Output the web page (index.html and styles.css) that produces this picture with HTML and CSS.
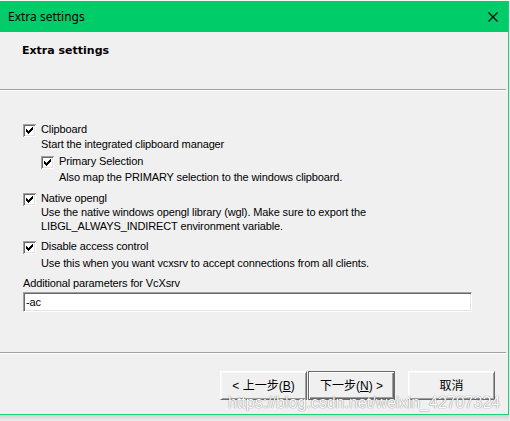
FILE: index.html
```html
<!DOCTYPE html>
<html>
<head>
<meta charset="utf-8">
<link rel="stylesheet" href="styles.css">
</head>
<body>
<div class="topstrip"></div>
<div class="window">
  <div class="titlebar">
    <span class="title">Extra settings</span>
    <svg class="close" width="10" height="10" viewBox="0 0 10 10"><path d="M0.5 0.5 L9.5 9.5 M9.5 0.5 L0.5 9.5" stroke="#000" stroke-width="1.1" fill="none"/></svg>
  </div>
  <div class="header"><h1>Extra settings</h1></div>
  <div class="sep"></div>
  <div class="content">
    <div class="opt g-clip">
      <svg class="cb" width="13" height="13" viewBox="0 0 13 13" shape-rendering="crispEdges"><rect x="0" y="0" width="13" height="13" fill="#fff"/><path d="M0 0H13V1H1V13H0Z" fill="#a0a0a0"/><path d="M1 1H12V2H2V12H1Z" fill="#696969"/><path d="M11 2H12V12H2V11H11Z" fill="#e3e3e3"/><path d="M3 5H4V6H5V7H6V6H7V5H8V4H9V3H10V6H9V7H8V8H7V9H6V10H5V9H4V8H3Z" fill="#000"/></svg>
      <span>Clipboard</span>
    </div>
    <div class="desc d-clip">Start the integrated clipboard manager</div>
    <div class="sub">
      <div class="opt g-prim">
        <svg class="cb" width="13" height="13" viewBox="0 0 13 13" shape-rendering="crispEdges"><rect x="0" y="0" width="13" height="13" fill="#fff"/><path d="M0 0H13V1H1V13H0Z" fill="#a0a0a0"/><path d="M1 1H12V2H2V12H1Z" fill="#696969"/><path d="M11 2H12V12H2V11H11Z" fill="#e3e3e3"/><path d="M3 5H4V6H5V7H6V6H7V5H8V4H9V3H10V6H9V7H8V8H7V9H6V10H5V9H4V8H3Z" fill="#000"/></svg>
        <span>Primary Selection</span>
      </div>
      <div class="desc d-prim">Also map the PRIMARY selection to the windows clipboard.</div>
    </div>
    <div class="opt g-gl">
      <svg class="cb" width="13" height="13" viewBox="0 0 13 13" shape-rendering="crispEdges"><rect x="0" y="0" width="13" height="13" fill="#fff"/><path d="M0 0H13V1H1V13H0Z" fill="#a0a0a0"/><path d="M1 1H12V2H2V12H1Z" fill="#696969"/><path d="M11 2H12V12H2V11H11Z" fill="#e3e3e3"/><path d="M3 5H4V6H5V7H6V6H7V5H8V4H9V3H10V6H9V7H8V8H7V9H6V10H5V9H4V8H3Z" fill="#000"/></svg>
      <span>Native opengl</span>
    </div>
    <div class="desc d-gl">Use the native windows opengl library (wgl). Make sure to export the<br>LIBGL_ALWAYS_INDIRECT environment variable.</div>
    <div class="opt g-ac">
      <svg class="cb" width="13" height="13" viewBox="0 0 13 13" shape-rendering="crispEdges"><rect x="0" y="0" width="13" height="13" fill="#fff"/><path d="M0 0H13V1H1V13H0Z" fill="#a0a0a0"/><path d="M1 1H12V2H2V12H1Z" fill="#696969"/><path d="M11 2H12V12H2V11H11Z" fill="#e3e3e3"/><path d="M3 5H4V6H5V7H6V6H7V5H8V4H9V3H10V6H9V7H8V8H7V9H6V10H5V9H4V8H3Z" fill="#000"/></svg>
      <span>Disable access control</span>
    </div>
    <div class="desc d-ac">Use this when you want vcxsrv to accept connections from all clients.</div>
    <div class="label">Additional parameters for VcXsrv</div>
    <div class="input">-ac</div>
  </div>
  <div class="sep"></div>
  <div class="footer">
    <div class="btn">&lt; 上一步(<u>B</u>)</div>
    <div class="btn default">下一步(<u>N</u>) &gt;</div>
    <div class="btn cancel">取消</div>
  </div>
</div>
<div class="shadow"></div>
<div class="watermark">https://blog.csdn.net/weixin_42707324</div>
</body>
</html>
```
FILE: styles.css
```css
html, body {
  margin: 0;
  padding: 0;
}
body {
  width: 510px;
  height: 421px;
  overflow: hidden;
  position: relative;
  background: #ededed;
  font-family: "Liberation Sans", Arial, sans-serif;
  font-size: 11px;
  color: #000;
}
.topstrip {
  height: 1px;
  background: #f6f6f6;
}
.window {
  width: 508px;
  height: 413px;
  background: #f0f0f0;
  border-right: 1px solid #1dcf72;
  border-bottom: 1px solid #1dcf72;
  display: flex;
  flex-direction: column;
}
.titlebar {
  height: 31px;
  flex: none;
  background: #00cc6a;
  display: flex;
  align-items: center;
  padding-left: 8px;
}
.title {
  font-family: "Noto Sans", "Liberation Sans", sans-serif;
  font-size: 12px;
  color: #000;
  line-height: 14px;
  margin-top: 1px;
}
.close {
  margin-left: auto;
  margin-right: 10px;
}
.header {
  height: 57px;
  flex: none;
  box-sizing: border-box;
  padding: 12px 0 0 22px;
}
.header h1 {
  margin: 0;
  font-family: "DejaVu Sans", sans-serif;
  font-weight: bold;
  font-size: 11px;
  line-height: 13px;
}
.sep {
  height: 1px;
  flex: none;
  background: #a0a0a0;
  border-bottom: 1px solid #fff;
  margin-right: 2px;
}
.content {
  flex: 1;
  padding: 31px 0 0 23px;
  letter-spacing: -0.12px;
}
.opt {
  display: flex;
  align-items: flex-start;
  height: 14px;
  line-height: 14px;
}
.cb {
  flex: none;
  margin-top: 2px;
  margin-right: 5px;
}
.desc {
  padding-left: 18px;
  line-height: 14px;
}
.sub {
  padding-left: 18px;
}
.d-clip { margin-top: 1px; }
.g-prim { margin-top: 3px; }
.d-prim { margin-top: 2px; }
.g-gl { margin-top: 7px; }
.g-ac { margin-top: 6px; }
.d-ac { margin-top: 3px; }
.label {
  margin-top: 6px;
  line-height: 14px;
}
.input {
  margin-top: 2px;
  width: 449px;
  height: 20px;
  box-sizing: border-box;
  background: #fff;
  border: 1px solid;
  border-color: #a0a0a0 #fff #fff #a0a0a0;
  box-shadow: inset 1px 1px #696969, inset -1px -1px #e3e3e3;
  padding-left: 2px;
  line-height: 18px;
}
.footer {
  height: 60px;
  flex: none;
  box-sizing: border-box;
  padding: 17px 13px 0 0;
  display: flex;
  justify-content: flex-end;
  align-items: flex-start;
  gap: 1px;
}
.btn {
  width: 87px;
  height: 29px;
  box-sizing: border-box;
  background: #f0f0f0;
  border: 1px solid;
  border-color: #fff #696969 #696969 #fff;
  box-shadow: inset 1px 1px #f8f8f8, inset -1px -1px #a0a0a0;
  display: flex;
  align-items: center;
  justify-content: center;
  font-family: "Liberation Sans", "Noto Sans CJK SC", sans-serif;
  font-size: 12px;
  line-height: 14px;
}
.btn.default {
  border-color: #696969;
  box-shadow: inset 1px 1px #fff, inset -1px -1px #696969, inset -2px -2px #a0a0a0;
}
.btn.cancel {
  margin-left: 12px;
}
.btn u {
  text-decoration: underline;
  text-underline-offset: 1px;
}
.shadow {
  height: 6px;
  background: linear-gradient(#d2d2d2, #ececec);
  width: 509px;
}
.watermark {
  position: absolute;
  left: 228px;
  top: 394px;
  font-family: "Liberation Sans", Arial, sans-serif;
  font-size: 16px;
  line-height: 17px;
  color: #fbfbfb;
  text-shadow: 0 0 1px rgba(0, 0, 0, 0.45), 0 0 1px rgba(0, 0, 0, 0.25);
}
```
